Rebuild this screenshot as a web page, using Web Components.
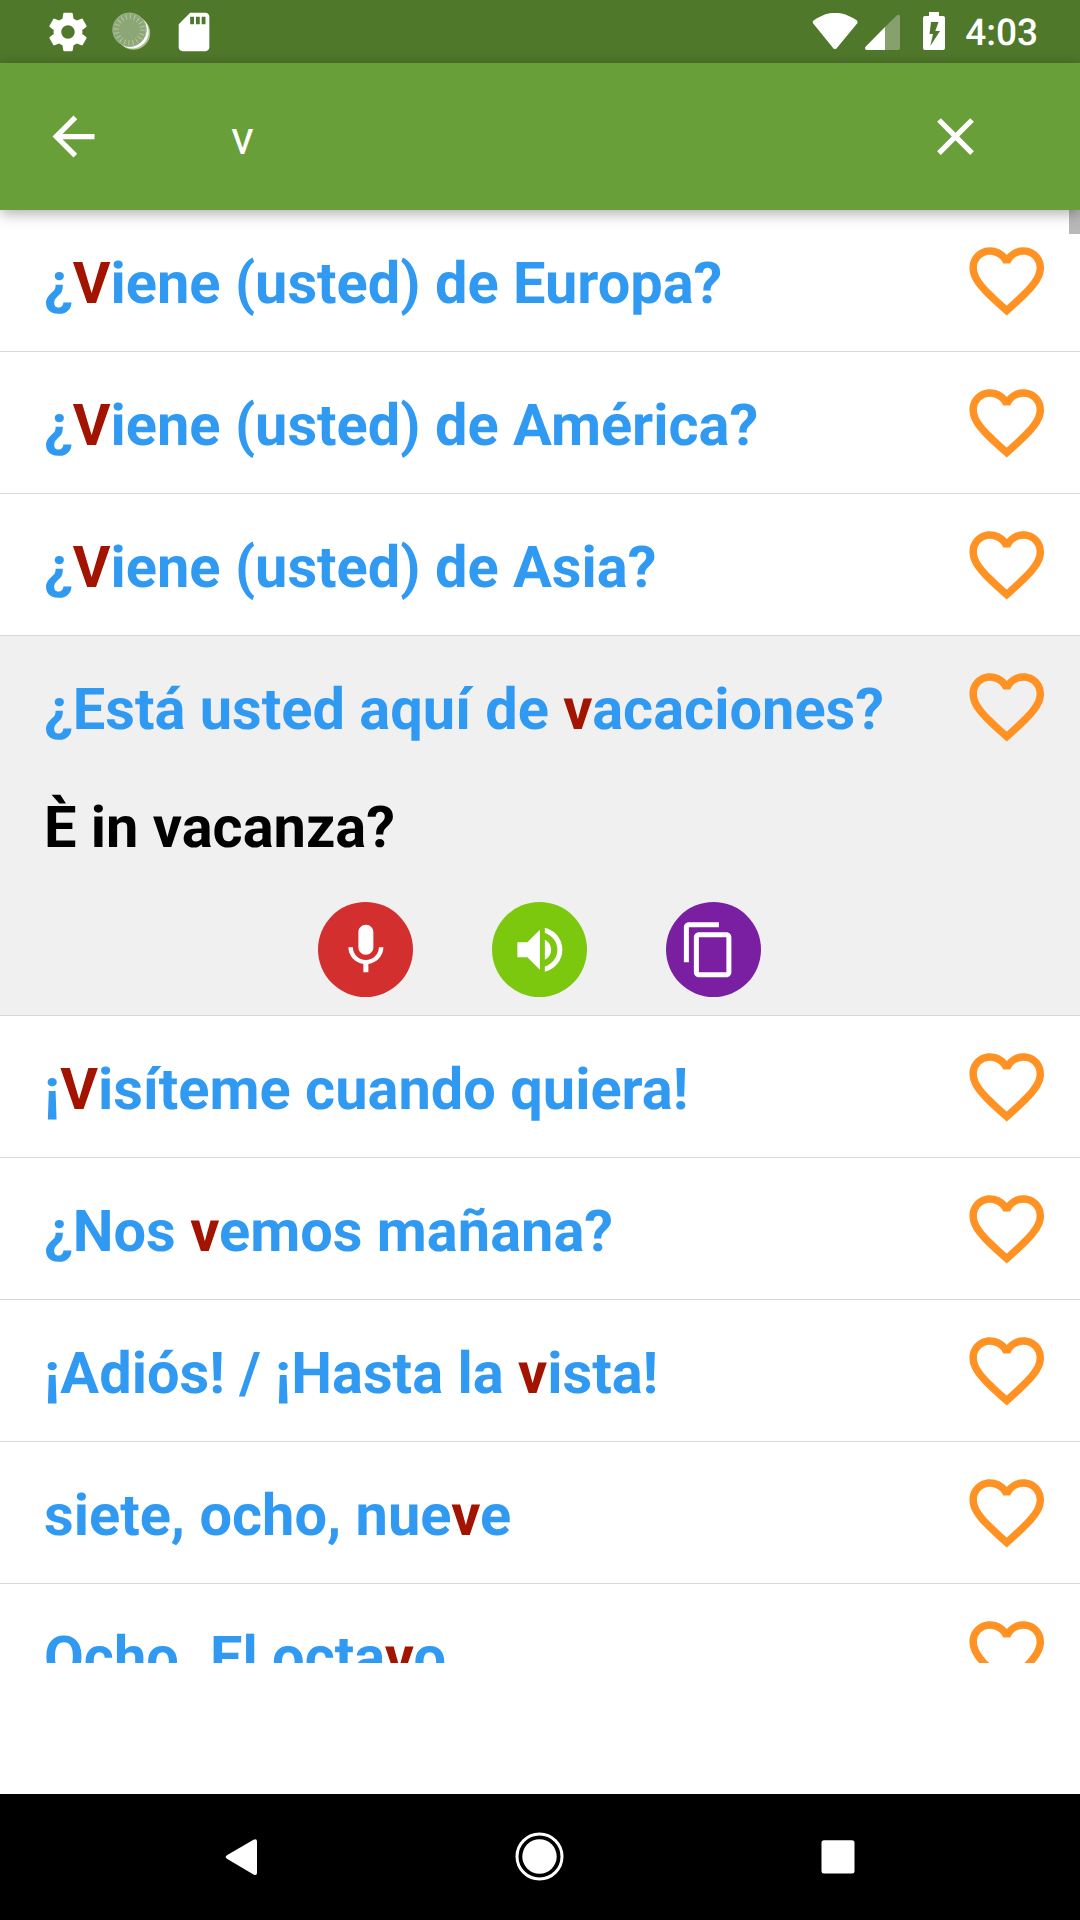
<!DOCTYPE html>
<html lang="es">
<head>
<meta charset="utf-8">
<title>Buscar frases</title>
<style>
html,body{margin:0;padding:0;width:1080px;height:1920px;overflow:hidden;background:#fff;font-family:Roboto,"Liberation Sans",sans-serif;text-rendering:geometricPrecision}
</style>
</head>
<body>
<phrase-app></phrase-app>
<script>
const ICONS={
 back:'M20 11H7.83l5.59-5.59L12 4l-8 8 8 8 1.41-1.41L7.83 13H20v-2z',
 close:'M19 6.41L17.59 5 12 10.59 6.41 5 5 6.41 10.59 12 5 17.59 6.41 19 12 13.41 17.59 19 19 17.59 13.41 12z',
 heart:'M16.5 3C14.76 3 13.09 3.81 12 5.09 10.91 3.81 9.24 3 7.5 3 4.42 3 2 5.42 2 8.5c0 3.78 3.4 6.86 8.55 11.54L12 21.35l1.45-1.32C18.6 15.36 22 12.28 22 8.5 22 5.42 19.58 3 16.5 3zm-4.4 15.55l-.1.1-.1-.1C7.14 14.24 4 11.39 4 8.5 4 6.5 5.5 5 7.5 5c1.54 0 3.04.99 3.57 2.36h1.87C13.46 5.99 14.96 5 16.5 5c2 0 3.5 1.5 3.5 3.5 0 2.89-3.14 5.74-7.9 10.05z',
 mic:'M12 14c1.66 0 3-1.34 3-3V5c0-1.66-1.34-3-3-3S9 3.34 9 5v6c0 1.66 1.34 3 3 3zm5.2-3c0 2.9-2.4 5.1-5.2 5.1S6.8 13.9 6.8 11H5c0 3.41 2.72 6.23 6 6.72V21h2v-3.28c3.28-.48 6-3.3 6-6.72h-1.8z',
 volume:'M3 9v6h4l5 5V4L7 9H3zm13.5 3c0-1.77-1.02-3.29-2.5-4.03v8.05c1.48-.73 2.5-2.25 2.5-4.02zM14 3.23v2.06c2.89.86 5 3.54 5 6.71s-2.11 5.85-5 6.71v2.06c4.01-.91 7-4.49 7-8.77s-2.99-7.86-7-8.77z',
 copy:'M16 1H4c-1.1 0-2 .9-2 2v14h2V3h12V1zm3 4H8c-1.1 0-2 .9-2 2v14c0 1.1.9 2 2 2h11c1.1 0 2-.9 2-2V7c0-1.1-.9-2-2-2zm0 16H8V7h11v14z',
 gear:'M19.43 12.98c.04-.32.07-.64.07-.98s-.03-.66-.07-.98l2.11-1.65c.19-.15.24-.42.12-.64l-2-3.46c-.12-.22-.39-.3-.61-.22l-2.49 1c-.52-.4-1.08-.73-1.69-.98l-.38-2.65C14.46 2.18 14.25 2 14 2h-4c-.25 0-.46.18-.49.42l-.38 2.65c-.61.25-1.17.59-1.69.98l-2.49-1c-.23-.09-.49 0-.61.22l-2 3.46c-.13.22-.07.49.12.64l2.11 1.65c-.04.32-.07.65-.07.98s.03.66.07.98l-2.11 1.65c-.19.15-.24.42-.12.64l2 3.46c.12.22.39.3.61.22l2.49-1c.52.4 1.08.73 1.69.98l.38 2.65c.03.24.24.42.49.42h4c.25 0 .46-.18.49-.42l.38-2.65c.61-.25 1.17-.59 1.69-.98l2.49 1c.23.09.49 0 .61-.22l2-3.46c.12-.22.07-.49-.12-.64l-2.11-1.65zM12 15.5c-1.93 0-3.5-1.57-3.5-3.5s1.57-3.5 3.5-3.5 3.5 1.57 3.5 3.5-1.57 3.5-3.5 3.5z',
 sd:'M18 2h-8L4.02 8 4 20c0 1.1.9 2 2 2h12c1.1 0 2-.9 2-2V4c0-1.1-.9-2-2-2zm-6 6h-2V4h2v4zm3 0h-2V4h2v4zm3 0h-2V4h2v4z'
};
function define(name,html,setup){
  const t=document.createElement('template');t.innerHTML=html;
  customElements.define(name,class extends HTMLElement{
    connectedCallback(){
      if(this.shadowRoot)return;
      const r=this.attachShadow({mode:'open'});
      r.append(t.content.cloneNode(true));
      if(setup)setup(this,r);
    }
  });
}
define('md-icon',`<style>:host{display:block;flex:none;width:var(--size,63px);height:var(--size,63px)}svg{display:block;width:100%;height:100%;fill:currentColor}</style><svg viewBox="0 0 24 24"><path/></svg>`,
 (h,r)=>r.querySelector('path').setAttribute('d',ICONS[h.getAttribute('name')]));

define('status-bar',`<style>
:host{display:flex;align-items:center;height:63px;flex:none;background:#50782b;color:#fff;padding-left:45px;padding-right:42px;box-sizing:border-box}
md-icon{--size:46px}
svg{display:block;flex:none}
.spin{margin-left:15px}
.gap{flex:1}
.time{font-size:37px;font-weight:500;line-height:58px;padding-top:5px;height:58px;margin-left:18px}
</style>
<md-icon name="gear"></md-icon>
<svg class="spin" width="51" height="63" viewBox="106 0 51 63"><circle cx="133.5" cy="33" r="16.7" fill="#a9bf94"/><circle cx="132" cy="31.8" r="16.6" fill="#fff"/><circle cx="129.5" cy="29.7" r="17" fill="#8ca676"/><circle cx="129.5" cy="29.7" r="13" fill="none" stroke="#b5c6a7" stroke-width="5.2" stroke-dasharray="1 3.084"/><circle cx="129.5" cy="29.7" r="16.6" fill="none" stroke="#9db58a" stroke-width=".9"/></svg>
<md-icon name="sd" style="margin-left:14px"></md-icon>
<div class="gap"></div>
<svg width="136" height="63" viewBox="811 0 136 63"><path d="M835 49Q833.5 49 832.7 47.5L813 23.2Q812.3 21.7 813.5 20.6C822 14.8 828 13 835 13S848.500 14.800 857 20.600Q858 21.700 857.300 23.200L837.300 47.500Q836.500 49 835 49Z" fill="#fff"/><path d="M885 27L897 15.200Q900 13.500 900 17V48Q900 50 898 50H885Z" fill="#86a16d"/><path d="M885 27V50H867Q864.300 50 865.300 47Z" fill="#fff"/><path fill-rule="evenodd" d="M929 12H939V16H943Q945 16 945 18V48Q945 50 943 50H925Q923 50 923 48V18Q923 16 925 16H929ZM931 22L929.500 34H933L930.300 46L940 31H935.300L938.500 22Z" fill="#fff"/></svg>
<div class="time">4:03</div>`);

define('search-bar',`<style>
:host{display:flex;align-items:center;height:147px;flex:none;background:#689f38;color:#fff;padding:0 93px 0 42px;box-sizing:border-box;position:relative;z-index:2;box-shadow:0 3px 14px rgba(0,0,0,.34)}
.q{flex:1;margin-left:126px;font-size:47.25px;line-height:56px;padding-top:2px}
</style>
<md-icon name="back"></md-icon><div class="q"><slot></slot></div><md-icon name="close"></md-icon>`);

define('hit-mark',`<style>:host{color:#a31400}</style><slot></slot>`);

define('phrase-row',`<style>
:host{display:block;flex:none;border-bottom:1px solid #d8d8d8;background:#fff;font-weight:700;font-size:57.75px}
:host([open]){background:#f0f0f0;height:379px}
.line{display:flex;align-items:center;height:141px;padding:0 29px 0 44px}
.t{flex:1;color:#3099f2;line-height:68px;padding-top:7px;white-space:nowrap}
md-icon{--size:89.5px;color:#ff9223;margin-bottom:.5px}
::slotted([slot=more]){display:block}
</style>
<div class="line"><div class="t"><slot></slot></div><md-icon name="heart"></md-icon></div><slot name="more"></slot>`);

define('round-button',`<style>
:host{display:flex;align-items:center;justify-content:center;width:95px;height:95px;border-radius:50%;color:#fff;--size:60px}
:host([icon=mic]){background:#d32f2f}
:host([icon=volume]){background:#7bc80f}
:host([icon=copy]){background:#7b1fa2}
svg{display:block;width:60px;height:60px;fill:currentColor}
:host([icon=copy]) svg{margin-right:9px}
</style><svg viewBox="0 0 24 24"><path transform="translate(-.05 -.1)"/></svg>`,(h,r)=>r.querySelector('path').setAttribute('d',ICONS[h.getAttribute('icon')]));

define('phrase-detail',`<style>
:host{display:block}
.tr{color:#000;line-height:68px;padding:17px 44px 0}
.acts{display:flex;justify-content:center;gap:79px;margin-top:40px;padding-right:1px}
</style>
<div class="tr"><slot></slot></div>
<div class="acts"><round-button icon="mic"></round-button><round-button icon="volume"></round-button><round-button icon="copy"></round-button></div>`);

define('phrase-list',`<style>
:host{display:flex;flex-direction:column;height:1453px;flex:none;overflow:hidden;position:relative}
.thumb{position:absolute;right:0;top:0;width:11px;height:24px;background:#b8b8b8}
</style><slot></slot><div class="thumb"></div>`);

define('nav-bar',`<style>
:host{display:flex;justify-content:center;height:126px;background:#000;margin-top:auto;flex:none;padding-right:1.5px}
svg{width:298.500px;height:126px;flex:none;display:block}
</style>
<svg viewBox="92 1794 298.500 126"><path d="M227.300 1855L253.500 1839.700Q257 1838.500 257 1841.500V1873Q257 1876 253.500 1874.500L227.300 1859Q224 1857 227.300 1855Z" fill="#fff"/></svg>
<svg viewBox="390 1794 298.500 126"><circle cx="539.500" cy="1856.500" r="22.500" fill="none" stroke="#fff" stroke-width="3"/><circle cx="539.500" cy="1856.500" r="17.200" fill="#fff"/></svg>
<svg viewBox="689 1794 298.500 126"><rect x="821.500" y="1840.300" width="33" height="33.300" rx="2.500" fill="#fff"/></svg>`);

define('phrase-app',`<style>:host{display:flex;flex-direction:column;width:1080px;height:1920px;background:#fff}</style>
<status-bar></status-bar>
<search-bar>v</search-bar>
<phrase-list>
<phrase-row>¿<hit-mark>V</hit-mark>iene (usted) de Europa?</phrase-row>
<phrase-row>¿<hit-mark>V</hit-mark>iene (usted) de América?</phrase-row>
<phrase-row>¿<hit-mark>V</hit-mark>iene (usted) de Asia?</phrase-row>
<phrase-row open>¿Está usted aquí de <hit-mark>v</hit-mark>acaciones?<phrase-detail slot="more">È in vacanza?</phrase-detail></phrase-row>
<phrase-row>¡<hit-mark>V</hit-mark>isíteme cuando quiera!</phrase-row>
<phrase-row>¿Nos <hit-mark>v</hit-mark>emos mañana?</phrase-row>
<phrase-row>¡Adiós! / ¡Hasta la <hit-mark>v</hit-mark>ista!</phrase-row>
<phrase-row>siete, ocho, nue<hit-mark>v</hit-mark>e</phrase-row>
<phrase-row>Ocho. El octa<hit-mark>v</hit-mark>o.</phrase-row>
</phrase-list>
<nav-bar></nav-bar>`);
</script>
</body>
</html>
